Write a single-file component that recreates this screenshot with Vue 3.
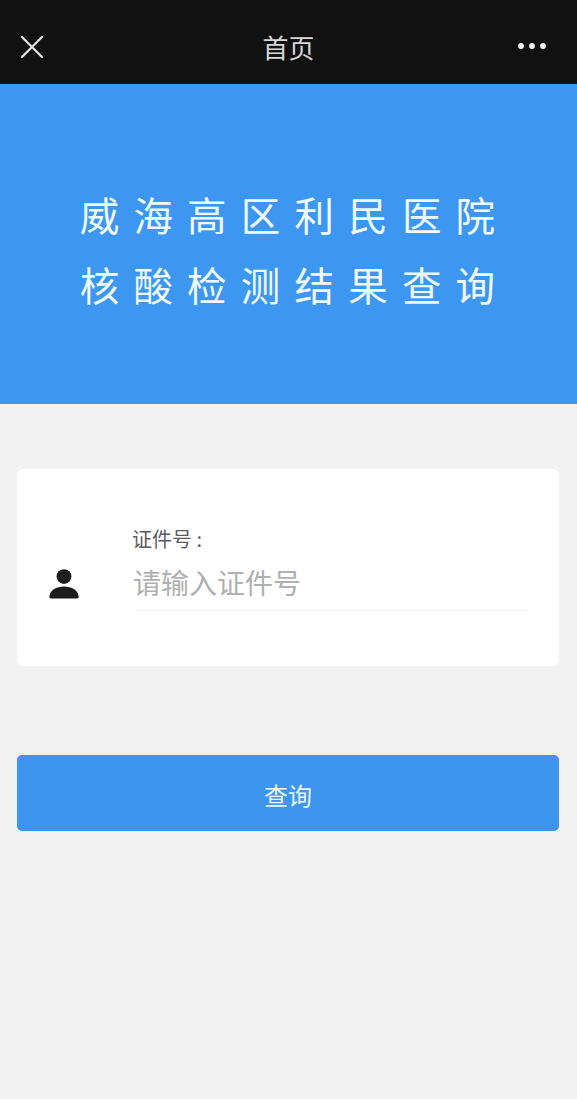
<script setup>
const titleLines = ['威海高区利民医院', '核酸检测结果查询']
</script>

<template>
  <div class="page">
    <header class="nav">
      <svg class="close" width="24" height="24" viewBox="0 0 24 24" aria-hidden="true">
        <path d="M2 2 22 22M22 2 2 22" stroke="#e6e6e6" stroke-width="2.2" stroke-linecap="round" fill="none" />
      </svg>
      <span class="nav-title">首页</span>
      <svg class="more" width="30" height="8" viewBox="0 0 30 8" aria-hidden="true">
        <circle cx="4" cy="4" r="2.9" fill="#f4f4f4" />
        <circle cx="15" cy="4" r="2.9" fill="#f4f4f4" />
        <circle cx="26" cy="4" r="2.9" fill="#f4f4f4" />
      </svg>
    </header>

    <section class="banner">
      <div v-for="line in titleLines" :key="line" class="banner-line">{{ line }}</div>
    </section>

    <section class="card">
      <svg class="person" width="30" height="30" viewBox="0 0 30 30" aria-hidden="true">
        <circle cx="15" cy="7.6" r="7.4" fill="#1d1d1d" />
        <path d="M2 29.5C0.8 29.5 0.4 28.8 0.4 27.8C0.4 21.5 7.5 17.6 15 17.6S29.6 21.5 29.6 27.8C29.6 28.8 29.2 29.5 28 29.5Z" fill="#1d1d1d" />
      </svg>
      <div class="field">
        <div class="label">证件号 :</div>
        <div class="placeholder">请输入证件号</div>
      </div>
    </section>

    <button class="submit" type="button">查询</button>
  </div>
</template>

<style>
html, body { margin: 0; background: #f1f1f2; }
</style>

<style scoped>
.page {
  width: 577px;
  height: 1099px;
  overflow: hidden;
  background: #f1f1f2;
  font-family: "Noto Sans CJK SC", "Noto Sans", sans-serif;
  display: flex;
  flex-direction: column;
}
.nav {
  height: 84px;
  box-sizing: border-box;
  padding: 22px 30px 0 20px;
  background: #111112;
  display: grid;
  grid-template-columns: 1fr auto 1fr;
  align-items: start;
}
.close { margin-top: 13px; }
.more { margin-top: 20px; justify-self: end; }
.nav-title {
  font-size: 26px;
  line-height: 50px;
  color: #d8d8d8;
  margin-left: 10px;
}
.banner {
  height: 320px;
  background: #3d97f1;
  color: #eefaff;
  box-sizing: border-box;
  padding-top: 95px;
  display: flex;
  flex-direction: column;
  align-items: center;
}
.banner-line {
  font-size: 39.5px;
  font-weight: 400;
  line-height: 70px;
  letter-spacing: 14.2px;
  margin-right: -12px;
  white-space: nowrap;
}
.card {
  margin: 65px 18px 0 17px;
  height: 197px;
  box-sizing: border-box;
  background: #fff;
  border-radius: 6px;
  display: flex;
  padding-left: 32px;
  padding-right: 30px;
}
.person { margin-top: 100px; flex: none; }
.field {
  flex: 1;
  margin-left: 54px;
  padding-top: 56px;
}
.label {
  font-size: 20px;
  line-height: 30px;
  color: #5c5c5c;
  white-space: nowrap;
  margin-left: -1px;
  margin-top: -1px;
}
.placeholder {
  margin-top: 7px;
  margin-left: 3px;
  text-indent: -3px;
  padding-bottom: 7px;
  font-size: 28px;
  line-height: 42px;
  color: #b0b0b0;
  border-bottom: 1px solid #f3f3f3;
}
.submit {
  display: block;
  margin: 89px 18px 0 17px;
  height: 76px;
  border: 0;
  padding: 2px 0 0;
  border-radius: 5px;
  background: #3d95ee;
  color: #e8f6ff;
  font-family: inherit;
  font-size: 24px;
}
</style>
